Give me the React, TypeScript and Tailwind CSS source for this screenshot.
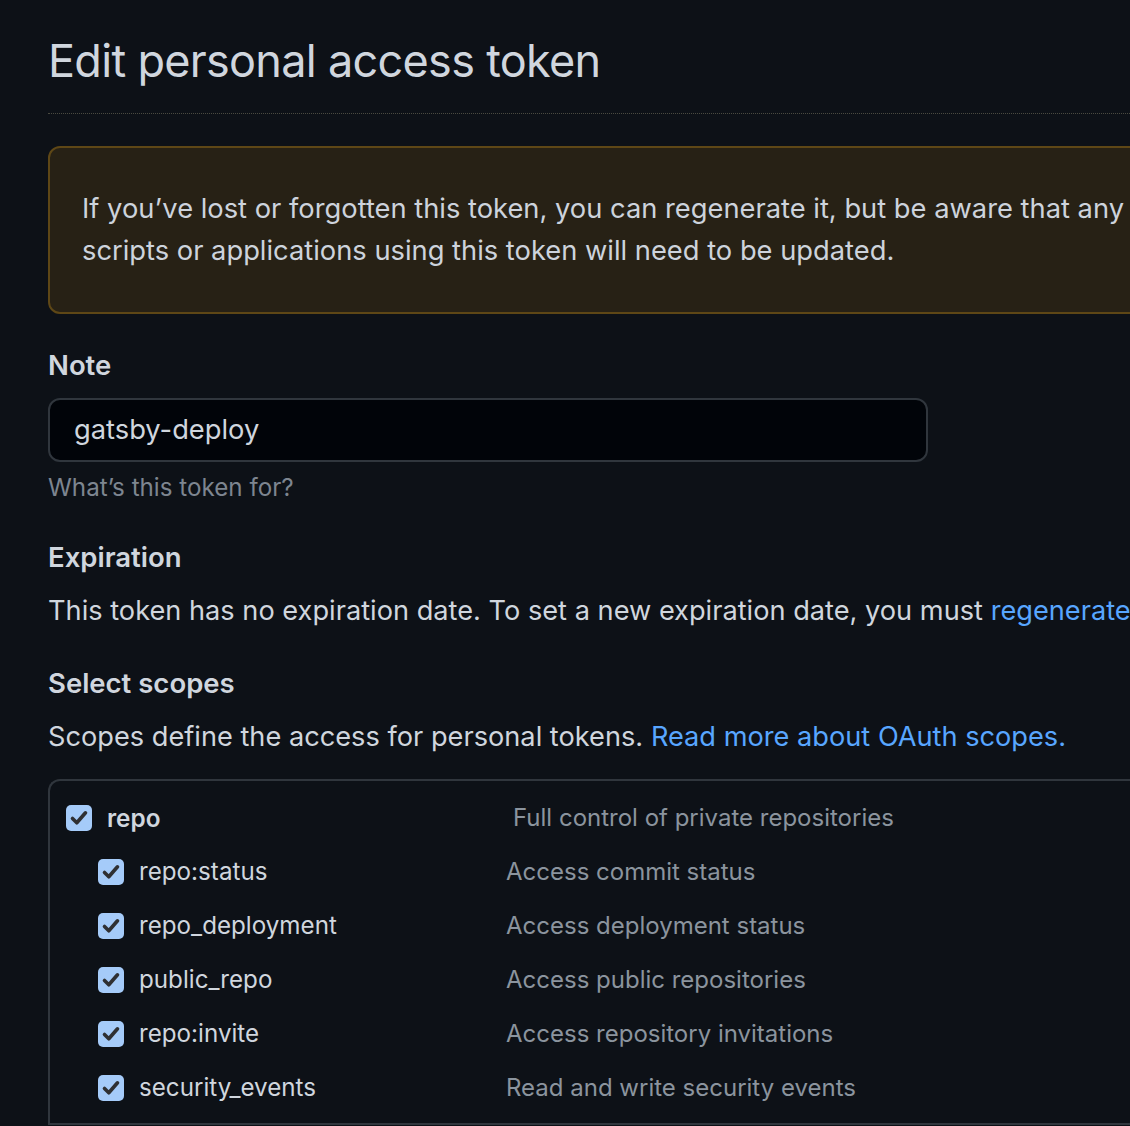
import React from "react";

function Check() {
  return (
    <span className="flex h-[26px] w-[26px] shrink-0 items-center justify-center rounded-[5px] bg-[#a5cbf9]">
      <svg width="26" height="26" viewBox="0 0 26 26" fill="none">
        <path d="M6.5 13.5 L10.8 17.8 L19.5 7.8" stroke="#2f3033" strokeWidth="3.6" strokeLinecap="round" strokeLinejoin="round" />
      </svg>
    </span>
  );
}

const subs = [
  ["repo:status", "Access commit status"],
  ["repo_deployment", "Access deployment status"],
  ["public_repo", "Access public repositories"],
  ["repo:invite", "Access repository invitations"],
  ["security_events", "Read and write security events"],
];

export default function App() {
  return (
    <div
      className="h-[1126px] w-[1130px] overflow-hidden bg-[#0d1117] text-[#c9d1d9]"
      style={{ fontFamily: "Inter, 'Noto Sans', sans-serif" }}
    >
      <div className="w-[1250px] pl-[48px] pt-[30px]">
        <h1 className="border-b border-dotted border-[#4a4a40] pb-[21px] text-[45px] leading-[62px] font-normal tracking-[-0.7px] text-[#d0d6de]">
          Edit personal access token
        </h1>

        <div className="mt-[32px] rounded-[12px] border-2 border-[#5e4716] bg-[#272115] px-[32px] py-[40px] text-[27.3px] leading-[42px] text-[#cdd3dc]">
          If you’ve lost or forgotten this token, you can regenerate it, but be aware that any
          <br />
          scripts or applications using this token will need to be updated.
        </div>

        <div className="mt-[30px] text-[27.5px] font-semibold leading-[42px] text-[#d0d6de]">Note</div>
        <div className="mt-[12px] flex h-[64px] w-[880px] items-center rounded-[12px] border-2 border-[#30363d] bg-[#010409] px-[24px] text-[27.3px] text-[#d0d6de]">
          gatsby-deploy
        </div>
        <div className="mt-[8px] text-[24.2px] leading-[36px] text-[#7d8590]">What’s this token for?</div>

        <div className="mt-[30px] text-[27.5px] font-semibold leading-[42px] text-[#d0d6de]">Expiration</div>
        <div className="mt-[12px] whitespace-nowrap text-[27.2px] leading-[42px] text-[#d0d6de]">
          This token has no expiration date. To set a new expiration date, you must{" "}
          <span className="text-[#58a6ff]">regenerate the token</span>.
        </div>

        <div className="mt-[30px] text-[27.5px] font-semibold leading-[42px] text-[#d0d6de]">Select scopes</div>
        <div className="mt-[12px] whitespace-nowrap text-[27.2px] leading-[42px] text-[#d0d6de]">
          Scopes define the access for personal tokens.{" "}
          <span className="text-[#58a6ff]">Read more about OAuth scopes.</span>
        </div>

        <div className="mt-[21px] rounded-tl-[12px] border-l-2 border-t-2 border-[#30363d]">
          <div className="border-b-2 border-[#30363d] pb-[14px] pl-[16px] pt-[16px]">
            <div className="flex h-[42px] items-center">
              <Check />
              <span className="w-[421px] pl-[15px] text-[24.3px] font-semibold text-[#d0d6de]">repo</span>
              <span className="text-[24px] text-[#8b949e]">Full control of private repositories</span>
            </div>
            {subs.map(([name, desc]) => (
              <div key={name} className="mt-[12px] flex h-[42px] items-center pl-[32px]">
                <Check />
                <span className="w-[382px] pl-[15px] text-[24.2px] text-[#d0d6de]">{name}</span>
                <span className="text-[24px] text-[#8b949e]">{desc}</span>
              </div>
            ))}
          </div>
        </div>
      </div>
    </div>
  );
}
